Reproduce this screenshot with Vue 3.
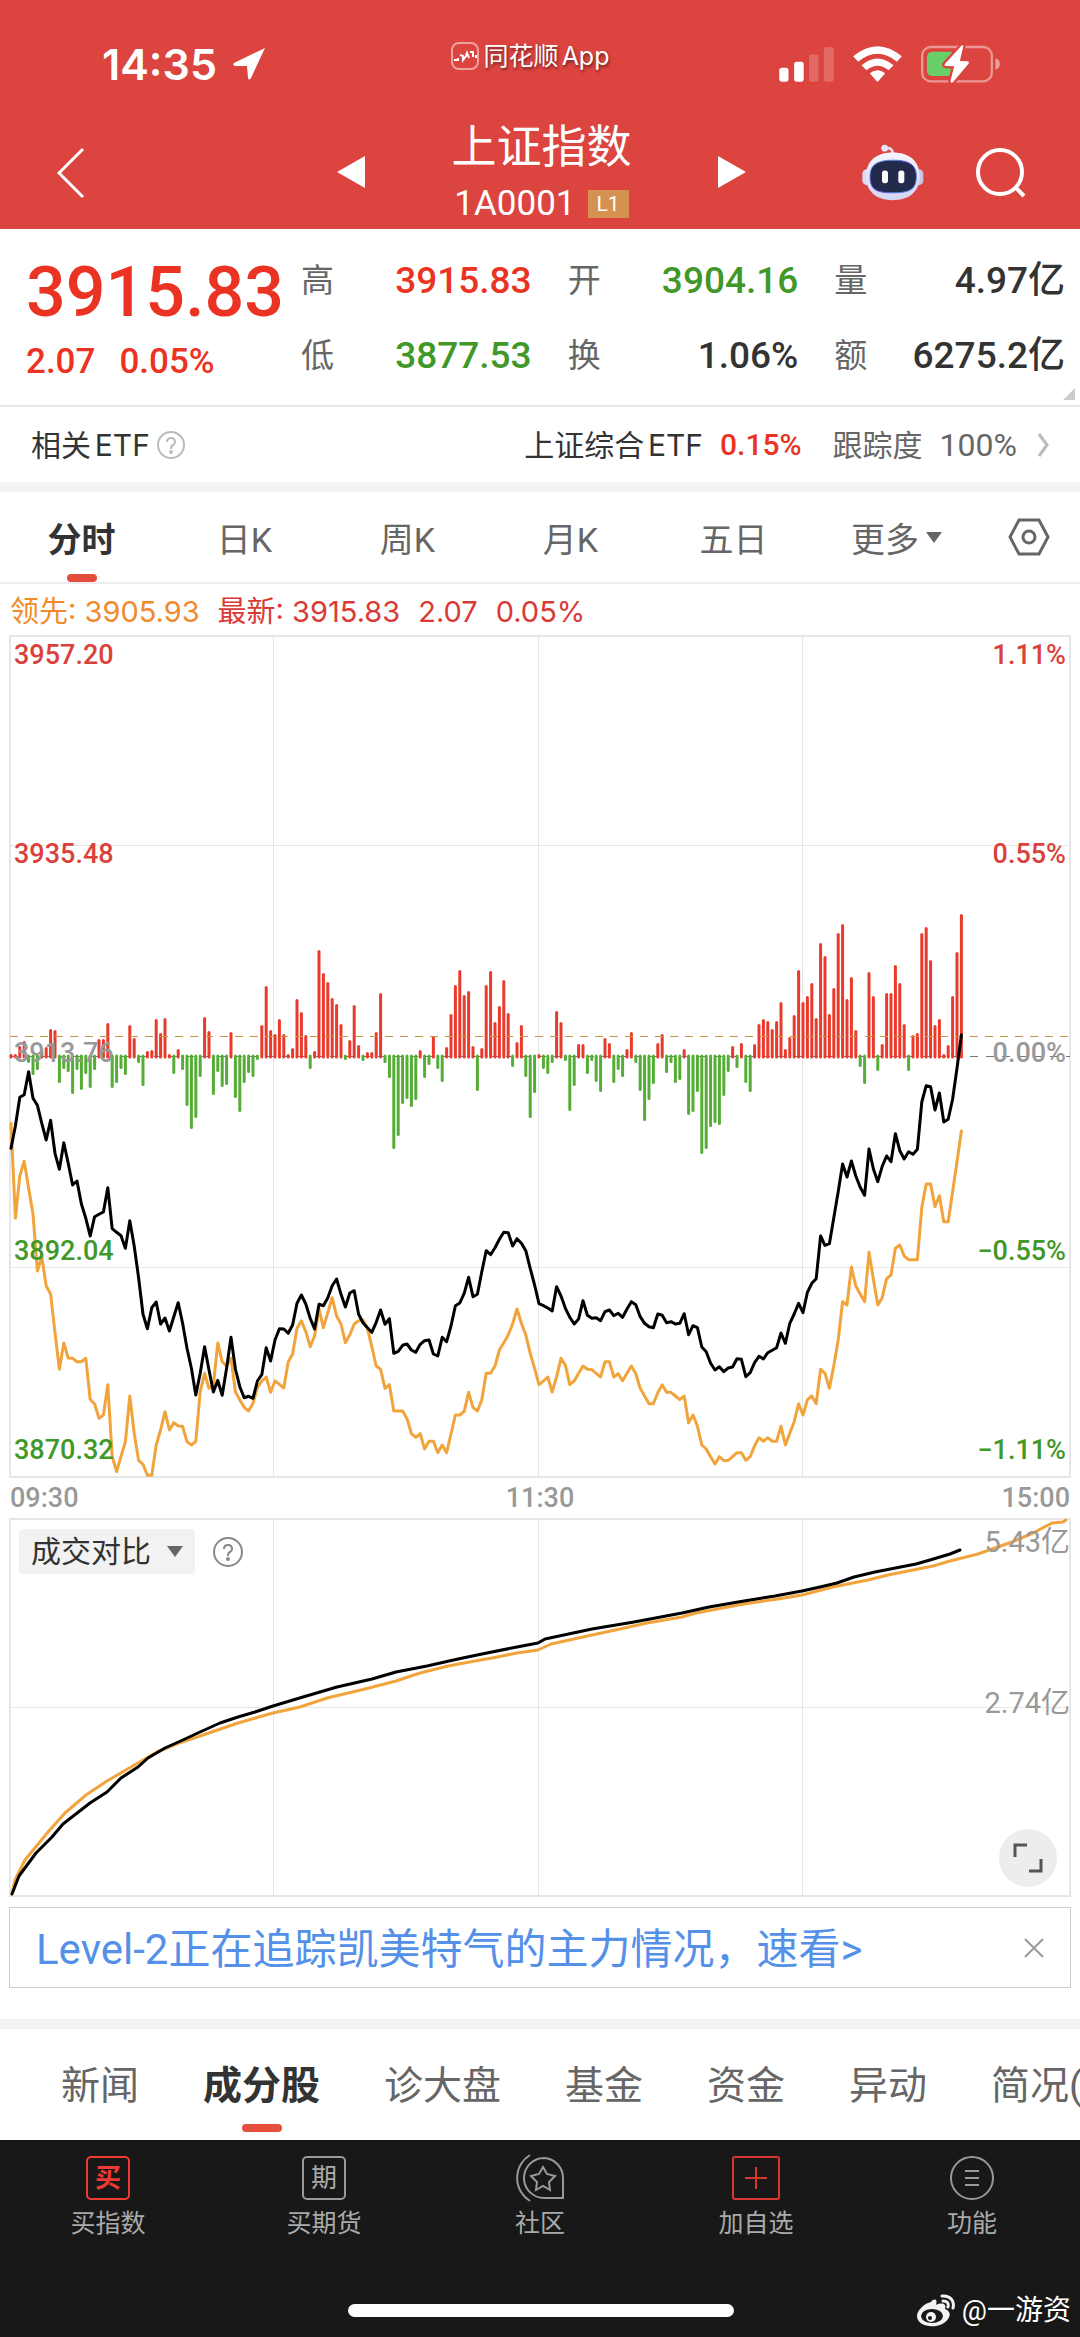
<template>
  <div class="page">
    <header class="top">
      <div class="status-bar">
        <div class="clock">
          <span>14:35</span>
          <svg class="locate" viewBox="0 0 34 34" aria-hidden="true">
            <path d="M33 1 L2 16 Q0 18 3 19 L15 19 L16 31 Q17 34 19 31 Z" />
          </svg>
        </div>
        <div class="source">
          <svg class="source-icon" viewBox="0 0 28 28" aria-hidden="true">
            <rect x="1" y="1" width="26" height="26" rx="7" />
            <path d="M3 18h4v-2M9 13l3 1v4l3-4 1-3 2 5M19 10h3v5M25 13v3" />
          </svg>
          <span>同花顺App</span>
        </div>
        <div class="signals">
          <svg class="cell" viewBox="54 48 165 106" aria-hidden="true">
            <rect x="54" y="111" width="28" height="42" rx="8" />
            <rect x="99" y="93" width="29" height="60" rx="8" />
            <rect class="dim" x="144" y="71" width="29" height="82" rx="8" />
            <rect class="dim" x="189" y="48" width="30" height="105" rx="8" />
          </svg>
          <svg class="wifi" viewBox="275 46 146 108" aria-hidden="true">
            <path d="M275 77 Q348 16 421 77 L406 93 Q348 46 290 93 Z" />
            <path d="M300 104 Q348 63 396 104 L381 119 Q348 92 315 119 Z" />
            <path d="M325 128 Q348 110 371 128 L351 151 Q348 154 345 151 Z" />
          </svg>
          <svg class="battery" viewBox="478 44 236 114" aria-hidden="true">
            <rect class="shell" x="481" y="50" width="209" height="103" rx="26" />
            <path class="shell-tip" d="M701 84 Q714 88 714 101 Q714 114 701 118 Z" />
            <path class="level" d="M513 64 H570 V137 H513 Q495 137 495 119 V82 Q495 64 513 64 Z" />
            <path class="bolt" d="M600 45 L549 101 Q546 106 552 107 L577 108 L566 152 Q567 160 574 155 L620 100 Q624 94 617 93 L594 92 L604 50 Q605 43 600 45 Z" />
          </svg>
        </div>
      </div>

      <div class="title-bar">
        <button class="plain back" aria-label="返回">
          <svg viewBox="0 0 28 52"><path d="M26 2 L2 26 L26 50" /></svg>
        </button>
        <div class="stock">
          <button class="plain" aria-label="上一个">
            <svg class="arrow" viewBox="0 0 28 32"><path d="M28 0 V32 L0 16 Z" /></svg>
          </button>
          <div class="stock-name">
            <h1>上证指数</h1>
            <p><span>1A0001</span><em>L1</em></p>
          </div>
          <button class="plain" aria-label="下一个">
            <svg class="arrow" viewBox="0 0 28 32"><path d="M0 0 V32 L28 16 Z" /></svg>
          </button>
        </div>
        <div class="tools">
          <button class="plain" aria-label="智能助手">
            <svg class="robot" viewBox="299 340 186 170">
              <defs>
                <linearGradient id="shellFill" x1="0" y1="0" x2="0" y2="1">
                  <stop offset="0" stop-color="#f6f5ff" />
                  <stop offset="1" stop-color="#d3d5f3" />
                </linearGradient>
                <linearGradient id="visorEdge" x1="0" y1="0" x2="1" y2="1">
                  <stop offset="0" stop-color="#5fb4e8" />
                  <stop offset="0.5" stop-color="#6a3fe0" />
                  <stop offset="1" stop-color="#5aa8f0" />
                </linearGradient>
              </defs>
              <path d="M370 353 Q391 348 392 370" fill="none" stroke="#dfe0f7" stroke-width="8" />
              <circle cx="367" cy="352" r="10" fill="#e6e6fa" />
              <rect x="300" y="415" width="30" height="48" rx="14" fill="#dcdcf6" />
              <rect x="453" y="415" width="30" height="48" rx="14" fill="#c6c6ee" />
              <path d="M391 365 C440 365 472 390 472 437 C472 482 440 508 391 508 C342 508 311 482 311 437 C311 390 342 365 391 365 Z" fill="url(#shellFill)" />
              <path d="M392 388 C440 388 462 402 462 436 C462 474 446 486 392 486 C338 486 323 474 323 436 C323 402 344 388 392 388 Z" fill="#232b4d" stroke="url(#visorEdge)" stroke-width="3" />
              <rect x="359" y="419" width="18" height="38" rx="8" fill="#fff" />
              <rect x="408" y="419" width="18" height="38" rx="8" fill="#fff" />
            </svg>
          </button>
          <button class="plain" aria-label="搜索">
            <svg class="search" viewBox="0 0 50 50">
              <circle cx="24" cy="24" r="22" />
              <path d="M39 39 L48 48" />
            </svg>
          </button>
        </div>
      </div>
    </header>

    <section class="quote">
      <div class="last">
        <strong>3915.83</strong>
        <p><span>2.07</span><span>0.05%</span></p>
      </div>
      <dl class="figures">
        <div v-for="item in figures" :key="item.label" class="figure">
          <dt>{{ item.label }}</dt>
          <dd :class="item.tone">{{ item.value }}</dd>
        </div>
      </dl>
      <i class="corner"></i>
    </section>

    <section class="etf">
      <span class="etf-title">相关ETF</span>
      <button class="plain" aria-label="说明">
        <svg class="help light" viewBox="0 0 30 30">
          <circle cx="15" cy="15" r="13" />
          <path d="M11 12 Q11 8 15 8 Q19 8 19 12 Q19 14 17 15 Q15 16 15 18 V19" />
          <circle class="dot" cx="15" cy="22" r="1" />
        </svg>
      </button>
      <a class="etf-link" href="#">
        <span>上证综合ETF</span>
        <span class="up">0.15%</span>
        <span class="track">跟踪度</span>
        <span class="ratio">100%</span>
        <svg class="chevron" viewBox="0 0 12 24"><path d="M2 1 L10 12 L2 23" /></svg>
      </a>
    </section>

    <nav class="period-tabs">
      <button
        v-for="(tab, index) in periods"
        :key="tab"
        :class="['plain', 'period', { active: activePeriod === index }]"
        @click="activePeriod = index"
      >
        {{ tab }}<i v-if="tab === '更多'" class="caret"></i>
      </button>
      <button class="plain settings" aria-label="设置">
        <svg viewBox="0 0 42 38">
          <path d="M11 2 H31 L40 19 L31 36 H11 L2 19 Z" />
          <circle cx="21" cy="19" r="6" />
        </svg>
      </button>
    </nav>

    <p class="legend">
      <span class="lead">领先: 3905.93</span>
      <span>最新: 3915.83</span>
      <span>2.07</span>
      <span>0.05%</span>
    </p>

    <section class="chart">
      <svg viewBox="0 0 1062 843" aria-hidden="true">
        <g class="grid">
          <rect x="1" y="1" width="1060" height="841" />
          <path d="M264.5 1V842M529.5 1V842M793.5 1V842M1 210.5H1061M1 632.5H1061" />
        </g>
        <path class="zero" d="M1 421.5H1061" />
        <path
          v-for="(bar, index) in bars"
          :key="index"
          :class="['bar', bar < 0 ? 'fall' : 'rise']"
          :d="barPath(bar, index)"
        />
        <path class="latest" d="M1 401.5H1061" />
        <polyline class="line orange" :points="leadPoints" />
        <polyline class="line black" :points="pricePoints" />
      </svg>
      <ul class="scale">
        <li v-for="row in scale" :key="row.price" :class="row.tone">
          <span>{{ row.price }}</span>
          <span>{{ row.percent }}</span>
        </li>
      </ul>
    </section>
    <div class="times">
      <span>09:30</span>
      <span>11:30</span>
      <span>15:00</span>
    </div>

    <section class="chart volume">
      <svg viewBox="0 0 1062 379" aria-hidden="true">
        <g class="grid">
          <rect x="1" y="1" width="1060" height="377" />
          <path d="M264.5 1V378M529.5 1V378M793.5 1V378M1 189.5H1061" />
        </g>
        <polyline class="line orange" :points="volumeYesterday" />
        <polyline class="line black" :points="volumeToday" />
      </svg>
      <div class="volume-head">
        <div class="picker">
          <select v-model="indicator" aria-label="指标">
            <option>成交对比</option>
          </select>
          <i class="caret"></i>
        </div>
        <button class="plain" aria-label="指标说明">
          <svg class="help" viewBox="0 0 30 30">
            <circle cx="15" cy="15" r="14" />
            <path d="M11 12 Q11 8 15 8 Q19 8 19 12 Q19 14 17 15 Q15 16 15 18 V19" />
            <circle class="dot" cx="15" cy="22" r="1" />
          </svg>
        </button>
      </div>
      <span class="volume-max">5.43亿</span>
      <span class="volume-mid">2.74亿</span>
      <button class="plain expand" aria-label="全屏">
        <svg viewBox="0 0 30 30"><path d="M2 14 V2 H14 M28 16 V28 H16" /></svg>
      </button>
    </section>

    <aside class="notice">
      <a href="#">Level-2正在追踪凯美特气的主力情况，速看&gt;</a>
      <button class="plain" aria-label="关闭">
        <svg viewBox="0 0 20 20"><path d="M1 1 L19 19 M19 1 L1 19" /></svg>
      </button>
    </aside>

    <nav class="news-tabs">
      <button
        v-for="(tab, index) in newsTabs"
        :key="tab"
        :class="['plain', 'news-tab', { active: activeNews === index }]"
        @click="activeNews = index"
      >
        {{ tab }}
      </button>
    </nav>

    <footer class="bottom">
      <div class="actions">
        <button class="plain action hot">
          <span class="glyph">买</span>
          <span class="caption">买指数</span>
        </button>
        <button class="plain action">
          <span class="glyph">期</span>
          <span class="caption">买期货</span>
        </button>
        <button class="plain action">
          <svg viewBox="0 0 52 50">
            <path d="M30 5 A20 20 0 0 0 30 45 H49 V25 A20 20 0 0 0 30 5 Z" />
            <path d="M16 2 A27 27 0 0 0 16 48" />
            <path d="M29 14 L33 21 L41 23 L35 29 L36 37 L29 33 L22 37 L23 29 L17 23 L25 21 Z" />
          </svg>
          <span class="caption">社区</span>
        </button>
        <button class="plain action hot">
          <svg viewBox="0 0 52 50">
            <rect x="3" y="4" width="46" height="42" rx="2" />
            <path d="M26 14 V36 M15 25 H37" />
          </svg>
          <span class="caption">加自选</span>
        </button>
        <button class="plain action">
          <svg viewBox="0 0 52 50">
            <circle cx="26" cy="25" r="21" />
            <path d="M19 18 H33 M19 25 H33 M19 32 H33" />
          </svg>
          <span class="caption">功能</span>
        </button>
      </div>
      <div class="home-bar"></div>
      <div class="author">
        <svg viewBox="0 0 40 34" aria-hidden="true">
          <path class="solid" d="M15 8 C18 4 22 5 20 11 C26 8 31 10 29 15 C34 17 35 21 32 25 C28 31 20 33 13 32 C5 31 1 27 1 22 C1 16 9 9 15 8 Z" />
          <ellipse class="hole" cx="16" cy="22" rx="11" ry="7" />
          <circle class="solid" cx="15" cy="23" r="5" />
          <circle class="hole" cx="14" cy="24" r="2" />
          <path class="wave" d="M26 2 C34 1 39 7 37 14 M27 7 C31 7 33 9 32 13" />
        </svg>
        <span>@一游资</span>
      </div>
    </footer>
  </div>
</template>

<script setup>
import { ref } from 'vue'

const activePeriod = ref(0)
const activeNews = ref(1)
const indicator = ref('成交对比')

const periods = ['分时', '日K', '周K', '月K', '五日', '更多']
const newsTabs = ['新闻', '成分股', '诊大盘', '基金', '资金', '异动', '简况(']

const figures = [
  { label: '高', value: '3915.83', tone: 'up' },
  { label: '开', value: '3904.16', tone: 'down' },
  { label: '量', value: '4.97亿', tone: '' },
  { label: '低', value: '3877.53', tone: 'down' },
  { label: '换', value: '1.06%', tone: '' },
  { label: '额', value: '6275.2亿', tone: '' }
]

const scale = [
  { price: '3957.20', percent: '1.11%', tone: 'high' },
  { price: '3935.48', percent: '0.55%', tone: 'high' },
  { price: '3913.76', percent: '0.00%', tone: 'flat' },
  { price: '3892.04', percent: '−0.55%', tone: 'low' },
  { price: '3870.32', percent: '−1.11%', tone: 'low' }
]

// 每分钟一根柱，正数向上（红），负数向下（绿）
const bars = [
  1, 1, 9, 14, -5, -17, -12, 3, 8, 26, 25, -25, -11, -14, -36, -12, -32, -16, -30, -12,
  16, 16, 32, -30, -25, -11, -17, 30, 17, -5, -28, 4, 5, 36, 22, 37, 1, -16, 6, -12,
  -48, -71, -60, -19, 38, 24, -37, -14, -29, -27, 23, -40, -54, -25, -15, -19, -2, 30, 69, 25,
  21, 36, 21, 1, 7, 56, 43, 20, -11, 4, 105, 82, 73, 57, 51, 31, -2, 15, 50, 10,
  -3, 3, 3, 23, 62, -5, -20, -91, -78, -46, -41, -49, -42, 5, -20, -7, 19, -11, -24, 8,
  41, 70, 85, 60, 64, 9, -33, 7, 70, 84, 33, 49, 75, 42, -9, 13, 30, -19, -60, -35,
  1, -11, -16, -5, 44, 33, -3, -53, -28, 11, 11, -16, -3, -24, -34, 17, 12, -25, -12, -19,
  6, 23, -5, -33, -63, -42, -26, 12, 21, -15, -5, -25, -22, 6, -57, -54, -34, -96, -91, -69,
  -65, -67, -38, -14, 9, -10, 12, -25, -34, 11, 31, 36, 34, 26, 34, 53, 6, 18, 40, 85,
  53, 59, 72, 37, 112, 99, 41, 67, 122, 131, 56, 78, 25, -9, -26, 83, 59, -13, 11, 62,
  62, 90, 72, 31, -13, 20, 22, 122, 128, 95, 30, 36, 1, 10, 59, 103, 141
]

const price = [
  445, 378, 292, 284, 215, 295, 316, 370, 420, 361, 460, 508, 428, 490, 555, 543, 612, 655, 708, 650,
  643, 636, 563, 686, 697, 707, 745, 662, 738, 833, 943, 986, 923, 906, 972, 954, 993, 950, 908, 970,
  1045, 1105, 1185, 1120, 1040, 1110, 1176, 1141, 1186, 1105, 1012, 1107, 1160, 1193, 1189, 1195, 1143, 1124, 1043, 1083,
  1020, 986, 987, 1000, 975, 910, 885, 912, 955, 987, 913, 917, 893, 857, 837, 883, 921, 879, 872, 943,
  968, 983, 997, 967, 930, 973, 956, 1060, 1054, 1036, 1032, 1050, 1057, 1033, 1022, 1020, 1062, 1068, 1012, 1025,
  978, 917, 909, 880, 832, 890, 883, 815, 752, 764, 743, 718, 697, 698, 738, 716, 730, 752, 805, 855,
  911, 917, 924, 933, 860, 888, 925, 952, 972, 957, 902, 946, 955, 953, 962, 935, 930, 947, 940, 952,
  927, 905, 914, 950, 970, 980, 983, 942, 946, 968, 965, 972, 970, 941, 1004, 977, 983, 1041, 1055, 1090,
  1110, 1100, 1115, 1104, 1101, 1076, 1078, 1130, 1118, 1088, 1069, 1077, 1058, 1051, 1043, 999, 1030, 970, 942, 910,
  938, 877, 850, 836, 708, 736, 731, 653, 575, 492, 531, 483, 528, 562, 586, 447, 507, 545, 499, 468,
  485, 401, 452, 477, 455, 463, 448, 306, 257, 260, 330, 279, 366, 358, 298, 205, 105
]

const lead = [
  370, 655, 528, 484, 563, 642, 813, 770, 858, 882, 998, 1108, 1029, 1074, 1075, 1085, 1085, 1075, 1198, 1212,
  1255, 1245, 1154, 1370, 1415, 1370, 1325, 1188, 1300, 1381, 1393, 1426, 1426, 1335, 1290, 1235, 1290, 1268, 1278, 1279,
  1325, 1335, 1324, 1175, 1120, 1165, 1155, 1029, 1085, 1098, 1075, 1175, 1200, 1222, 1233, 1210, 1163, 1143, 1131, 1177,
  1143, 1153, 1164, 1086, 1062, 985, 962, 995, 1040, 1008, 927, 983, 938, 893, 948, 972, 1028, 1005, 972, 962,
  960, 985, 1040, 1098, 1108, 1165, 1154, 1233, 1233, 1233, 1256, 1301, 1312, 1301, 1347, 1324, 1324, 1358, 1335, 1358,
  1302, 1245, 1245, 1234, 1177, 1222, 1233, 1199, 1120, 1120, 1098, 1050, 1028, 1005, 972, 927, 970, 1005, 1060, 1105,
  1154, 1143, 1131, 1176, 1130, 1075, 1096, 1154, 1143, 1120, 1098, 1108, 1109, 1120, 1131, 1085, 1085, 1131, 1121, 1142,
  1120, 1098, 1121, 1165, 1188, 1211, 1211, 1178, 1154, 1177, 1177, 1188, 1199, 1188, 1268, 1245, 1278, 1335, 1347, 1370,
  1392, 1370, 1382, 1381, 1370, 1358, 1358, 1381, 1370, 1337, 1313, 1324, 1313, 1324, 1324, 1279, 1335, 1300, 1265, 1211,
  1245, 1199, 1188, 1211, 1108, 1120, 1165, 1097, 1020, 905, 915, 801, 858, 882, 905, 757, 838, 915, 893, 836,
  825, 745, 735, 768, 779, 779, 779, 622, 552, 552, 620, 587, 665, 665, 575, 485, 393
]

const minuteX = (index) => (2 + index * 4.4).toFixed(1)

const toPoints = (series) =>
  series.map((value, index) => `${minuteX(index)},${(365 + value / 3).toFixed(1)}`).join(' ')

const barPath = (bar, index) => `M${minuteX(index)} ${bar < 0 ? 421 : 422}V${421.5 - bar}`

const pricePoints = toPoints(price)
const leadPoints = toPoints(lead)

const volumeToday =
  '3,376 10,358 27,335 43,319 54,306 81,285 98,274 112,260 129,249 139,240 156,230 176,221 191,214 211,205 229,199 246,194 264,188 294,179 328,169 363,161 387,154 418,148 449,141 473,136 508,129 529,125 536,121 583,111 625,104 673,95 700,89 735,83 766,78 793,73 811,69 828,65 845,59 866,54 907,46 921,42 941,36 951,32'
const volumeYesterday =
  '3,375 6,362 16,342 39,314 56,295 77,277 98,263 122,249 148,234 170,225 191,218 229,205 264,195 291,189 318,180 356,171 387,163 411,155 439,148 466,143 483,140 508,135 529,132 542,126 583,117 611,111 638,105 673,99 687,95 735,86 769,81 793,77 824,69 859,62 879,57 924,48 941,43 969,36 983,31 1003,24 1024,15 1043,5 1054,4 1057,2'
</script>

<style>
body {
  margin: 0;
  background: #fff;
}
</style>

<style scoped>
.page {
  font-family: Roboto, "Noto Sans CJK SC", sans-serif;
  color: #333;
  background: #fff;
  overflow: hidden;
}

h1, p, dl, dd, ul {
  margin: 0;
  padding: 0;
}

svg {
  display: block;
  fill: none;
}

.plain {
  padding: 0;
  border: 0;
  background: none;
  color: inherit;
  font: inherit;
  cursor: pointer;
}

a {
  color: inherit;
  text-decoration: none;
}

.up { color: #ea3323; }
.down { color: #3f9828; }

/* 顶部 */
.top {
  background: #dc4440;
  color: #fff;
}

.status-bar {
  display: grid;
  grid-template-columns: 1fr auto 1fr;
  align-items: center;
  height: 88px;
  padding: 40px 80px 0 60px;
  box-sizing: border-box;
}

.clock {
  display: flex;
  align-items: center;
  gap: 15px;
  margin-left: 42px;
  font: 600 43px/48px Inter, sans-serif;
}

.locate {
  width: 34px;
  height: 34px;
  fill: #fff;
}

.source {
  display: flex;
  align-items: center;
  gap: 5px;
  margin-top: -16px;
  font: 25px/32px Inter, "Noto Sans CJK SC", sans-serif;
  text-autospace: normal;
  text-shadow: 1px 2px 3px rgba(0, 0, 0, 0.5);
}

.source-icon {
  width: 28px;
  height: 28px;
  stroke: #fff;
  stroke-width: 2;
}

.source-icon rect {
  stroke: #f0a29d;
}

.signals {
  display: flex;
  align-items: center;
  justify-content: flex-end;
  gap: 19px;
}

.cell { width: 55px; height: 35px; fill: #fff; }
.cell .dim { opacity: 0.2; }
.wifi { width: 49px; height: 36px; fill: #fff; }
.battery { width: 79px; height: 38px; }
.shell { stroke: #fff; stroke-opacity: 0.45; stroke-width: 7; }
.shell-tip { fill: #fff; fill-opacity: 0.5; }
.level { fill: #68cf69; }
.bolt { fill: #fff; stroke: #dc4440; stroke-width: 14; paint-order: stroke; }

.title-bar {
  display: grid;
  grid-template-columns: 1fr 410px 1fr;
  align-items: center;
  height: 141px;
  padding: 0 54px 0 57px;
}

.back svg {
  width: 28px;
  height: 52px;
  stroke: #fff;
  stroke-width: 3;
}

.stock {
  display: flex;
  align-items: center;
  justify-content: space-between;
  padding-top: 26px;
}

.arrow {
  width: 28px;
  height: 32px;
  fill: #fff;
}

.back,
.tools {
  padding-top: 28px;
}

.back {
  justify-self: start;
}

.stock-name {
  text-align: center;
}

.stock-name h1 {
  font-size: 45px;
  font-weight: 400;
  line-height: 64px;
}

.stock-name p {
  display: flex;
  align-items: center;
  justify-content: center;
  gap: 12px;
  font-size: 35px;
  line-height: 48px;
}

.stock-name em {
  padding: 0 9px;
  background: #d59150;
  font-size: 21px;
  font-style: normal;
  line-height: 28px;
}

.tools {
  display: flex;
  align-items: center;
  justify-content: flex-end;
  gap: 52px;
}

.robot { width: 62px; height: 57px; }
.search { width: 50px; height: 50px; stroke: #fff; stroke-width: 4; }

/* 行情 */
.quote {
  position: relative;
  display: flex;
  height: 178px;
  padding: 0 15px 0 26px;
  box-sizing: border-box;
  border-bottom: 2px solid #e8e8e8;
}

.last {
  width: 275px;
  color: #ea3323;
  font-weight: 500;
}

.last strong {
  display: block;
  padding-top: 23px;
  font-size: 70px;
  font-weight: 500;
  line-height: 80px;
}

.last p {
  display: flex;
  gap: 24px;
  padding-top: 8px;
  font-size: 35px;
  line-height: 44px;
}

.figures {
  flex: 1;
  display: grid;
  grid-template-columns: repeat(3, 1fr);
  align-content: start;
  gap: 27px 36px;
  padding-top: 28px;
}

.figure {
  display: flex;
  align-items: center;
  justify-content: space-between;
  line-height: 48px;
}

.figure dt {
  color: #666;
  font-size: 33px;
}

.figure dd {
  font-size: 37px;
  font-weight: 500;
  white-space: nowrap;
}

.corner {
  position: absolute;
  right: 5px;
  bottom: 5px;
  border-left: 12px solid transparent;
  border-bottom: 12px solid #ccc;
}

.etf {
  display: flex;
  align-items: center;
  height: 75px;
  padding: 0 31px;
  border-bottom: 10px solid #f3f3f3;
  font: 30px/40px Inter, "Noto Sans CJK SC", sans-serif;
  text-autospace: normal;
}

.etf-title {
  margin-right: 6px;
}

.help {
  width: 30px;
  height: 30px;
  stroke: #888;
  stroke-width: 2;
}

.help .dot { fill: #888; }
.help.light { stroke: #bbb; }

.etf-link {
  display: flex;
  align-items: center;
  margin-left: auto;
}

.etf-link .up {
  margin-left: 17px;
  font-family: Roboto, sans-serif;
  font-weight: 500;
}

.track { margin-left: 31px; color: #666; }
.ratio { margin-left: 17px; color: #666; font-family: Roboto, sans-serif; font-size: 32px; }

.chevron {
  width: 12px;
  height: 24px;
  margin-left: 20px;
  stroke: #bbb;
  stroke-width: 3;
}

/* 周期 */
.period-tabs {
  display: flex;
  height: 92px;
  border-bottom: 2px solid #ececec;
  box-sizing: border-box;
}

.period {
  position: relative;
  flex: 163;
  display: flex;
  align-items: center;
  justify-content: center;
  color: #666;
  font-size: 34px;
}

.period.active,
.news-tab.active {
  color: #333;
  font-weight: 700;
}

.period.active::after {
  content: "";
  position: absolute;
  left: 50%;
  bottom: 0;
  width: 30px;
  height: 8px;
  margin-left: -15px;
  border-radius: 4px;
  background: #e54d3d;
}

.caret {
  margin-left: 7px;
  border: 8px solid transparent;
  border-top: 11px solid #666;
  border-bottom: 0;
}

.settings {
  flex: 102;
  display: flex;
  align-items: center;
  justify-content: center;
}

.settings svg {
  width: 42px;
  height: 38px;
  stroke: #666;
  stroke-width: 3;
}

.legend {
  display: flex;
  gap: 18px;
  padding: 6px 10px 2px;
  color: #d93a35;
  font: 29px/43px Inter, "Noto Sans CJK SC", sans-serif;
}

.legend .lead {
  color: #f08a2c;
}

/* 图表 */
.chart {
  position: relative;
  margin: 0 9px;
}

.chart > svg {
  width: 100%;
  height: auto;
}

.grid {
  stroke: #e6e6e6;
  stroke-width: 2;
}

.grid path { stroke-width: 1; }

.zero {
  stroke: #777;
  stroke-width: 1;
  stroke-dasharray: 8 8;
}

.latest {
  stroke: #c8963f;
  stroke-width: 1;
  stroke-dasharray: 8 7;
}

.bar { stroke-width: 3; stroke-linecap: round; }
.rise { stroke: #ea3a2c; }
.fall { stroke: #55ad36; }
.line { stroke-width: 3; stroke-linejoin: round; stroke-linecap: round; }
.orange { stroke: #f2a43c; }
.black { stroke: #000; }

.scale {
  position: absolute;
  inset: 0;
  display: flex;
  flex-direction: column;
  justify-content: space-between;
  padding: 4px 5px 12px;
  font-size: 27px;
  font-weight: 500;
  line-height: 32px;
  list-style: none;
}

.scale li {
  display: flex;
  justify-content: space-between;
}

.high { color: #d9423b; }
.flat { color: #999; }
.low { color: #3f9828; }

.times {
  display: grid;
  grid-template-columns: 1fr auto 1fr;
  padding: 0 10px;
  color: #999;
  font-size: 27px;
  font-weight: 500;
  line-height: 40px;
}

.times span:last-child {
  text-align: right;
}

.volume-head {
  position: absolute;
  top: 11px;
  left: 10px;
  display: flex;
  align-items: center;
  gap: 18px;
}

.picker {
  display: flex;
  align-items: center;
  height: 45px;
  padding: 0 12px;
  border-radius: 4px;
  background: #f2f2f2;
}

.picker select {
  padding: 0;
  border: 0;
  background: none;
  color: #333;
  font: inherit;
  font-size: 30px;
  appearance: none;
}

.picker .caret {
  margin-left: 16px;
}

.volume-max,
.volume-mid {
  position: absolute;
  right: 1px;
  color: #999;
  font-size: 29px;
  line-height: 40px;
}

.volume-max { top: 4px; }
.volume-mid { top: 165px; }

.expand {
  position: absolute;
  right: 14px;
  bottom: 10px;
  display: flex;
  align-items: center;
  justify-content: center;
  width: 58px;
  height: 58px;
  border-radius: 50%;
  background: #ededed;
}

.expand svg {
  width: 30px;
  height: 30px;
  stroke: #555;
  stroke-width: 3;
}

.notice {
  display: flex;
  align-items: center;
  justify-content: space-between;
  height: 79px;
  margin: 10px 9px 31px;
  padding: 0 26px;
  border: 1px solid #ccc;
  color: #5590e8;
  font-size: 42px;
}

.notice a {
  padding-bottom: 4px;
}

.notice svg {
  width: 20px;
  height: 20px;
  stroke: #999;
  stroke-width: 2;
}

.news-tabs {
  display: flex;
  gap: 64px;
  height: 111px;
  padding-left: 61px;
  border-top: 10px solid #f3f3f3;
  overflow: hidden;
}

.news-tab {
  position: relative;
  flex: none;
  padding-bottom: 6px;
  color: #666;
  font-size: 39px;
}

.news-tab.active::after {
  content: "";
  position: absolute;
  left: 50%;
  bottom: 8px;
  width: 40px;
  height: 8px;
  margin-left: -20px;
  border-radius: 4px;
  background: #e54d3d;
}

/* 底部 */
.bottom {
  position: relative;
  height: 197px;
  background: #181818;
  color: #aaa;
}

.actions {
  display: flex;
  padding-top: 13px;
}

.action {
  flex: 1;
  display: flex;
  flex-direction: column;
  align-items: center;
  gap: 1px;
}

.action svg {
  width: 52px;
  height: 50px;
  stroke: #999;
  stroke-width: 2;
}

.action.hot svg {
  stroke: #d9362f;
}

.glyph {
  width: 40px;
  height: 40px;
  margin: 3px 0;
  border: 2px solid #999;
  border-radius: 5px;
  color: #aaa;
  font-size: 26px;
  line-height: 40px;
}

.hot .glyph {
  border-color: #f03a33;
  color: #f03a33;
  font-weight: 700;
}

.caption {
  font-size: 25px;
  line-height: 40px;
}

.home-bar {
  position: absolute;
  left: 50%;
  bottom: 20px;
  width: 386px;
  height: 13px;
  margin-left: -192px;
  border-radius: 7px;
  background: #fff;
}

.author {
  position: absolute;
  right: 9px;
  bottom: 6px;
  display: flex;
  align-items: center;
  gap: 6px;
  color: #fff;
  font-size: 28px;
  line-height: 40px;
}

.author svg {
  width: 40px;
  height: 34px;
}

.solid { fill: #f2f2f2; }
.hole { fill: #181818; }
.wave { stroke: #f2f2f2; stroke-width: 3; stroke-linecap: round; }
</style>
